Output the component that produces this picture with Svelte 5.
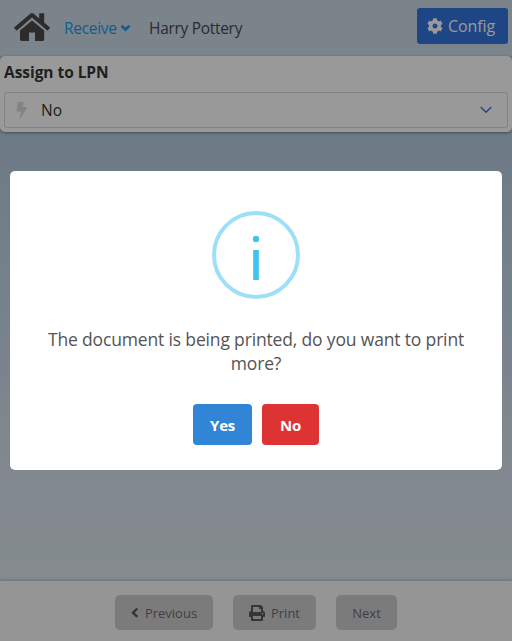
<script>
  let assign = $state('No');
  let open = $state(true);
</script>

<div class="page">
  <header>
    <svg class="home" viewBox="0 0 36 30" aria-hidden="true">
      <path d="M18 7.400 30.200 17.500V26.600q0 1.400-1.400 1.400H21V19.400H15V28H7.500Q6 28 6 26.600V17.500Z" />
      <path d="M25.200.2h5v9.300l5.500 4.800q.5.500 0 1l-1.700 1.900q-.6.500-1.100 0L18 4.600 3.200 17.200q-.6.500-1.100 0L.4 15.300q-.5-.5 0-1L16.300.7q1.700-1.200 3.400 0l5.500 4.700Z" />
    </svg>
    <span class="menu">Receive</span>
    <svg class="caret" viewBox="0 0 11 8" aria-hidden="true"><path d="M1.500 1.700 5.500 5.600 9.500 1.700" /></svg>
    <span class="user">Harry Pottery</span>
    <button class="config">
      <svg viewBox="0 0 512 512" aria-hidden="true"><path d="M487.400 315.700l-42.600-24.600c4.300-23.200 4.300-47 0-70.200l42.600-24.600c4.900-2.800 7.100-8.600 5.500-14-11.100-35.600-30-67.800-54.700-94.600-3.800-4.100-10-5.100-14.800-2.300L380.800 110c-17.900-15.400-38.500-27.300-60.800-35.100V25.800c0-5.600-3.900-10.500-9.400-11.700-36.700-8.200-74.300-7.800-109.200 0-5.500 1.200-9.400 6.100-9.400 11.700V75c-22.200 7.900-42.800 19.800-60.800 35.100L88.700 85.500c-4.900-2.800-11-1.900-14.800 2.300-24.700 26.700-43.600 58.900-54.700 94.600-1.700 5.400.6 11.200 5.500 14L67.300 221c-4.300 23.200-4.300 47 0 70.200l-42.600 24.600c-4.900 2.800-7.100 8.600-5.500 14 11.100 35.600 30 67.800 54.700 94.600 3.800 4.100 10 5.100 14.800 2.300l42.600-24.600c17.900 15.400 38.500 27.300 60.800 35.100v49.200c0 5.600 3.900 10.500 9.400 11.700 36.700 8.200 74.300 7.800 109.200 0 5.500-1.200 9.400-6.100 9.400-11.700v-49.200c22.200-7.900 42.800-19.800 60.800-35.100l42.600 24.600c4.900 2.800 11 1.900 14.800-2.300 24.700-26.700 43.600-58.900 54.700-94.600 1.500-5.500-.7-11.300-5.600-14.100zM256 336c-44.100 0-80-35.900-80-80s35.900-80 80-80 80 35.900 80 80-35.900 80-80 80z" /></svg>
      <span>Config</span>
    </button>
  </header>

  <section class="card">
    <label for="lpn">Assign to LPN</label>
    <div class="select" id="lpn">
      <svg class="bolt" viewBox="0 0 12 17" aria-hidden="true"><path d="M1.700 0H8L6.500 5H10.500Q11.300 5.100 10.800 6L4.800 16.200Q3.700 16.800 3.800 15.600L5 9.700H1.200Q.4 9.600.5 8.700Z" /></svg>
      <span>{assign}</span>
      <svg class="chev" viewBox="0 0 12 8" aria-hidden="true"><path d="M.7 1 6 6.300 11.300 1" /></svg>
    </div>
  </section>

  <div class="space"></div>

  <footer>
    <button class="prev">
      <svg viewBox="0 0 8 12" aria-hidden="true"><path d="M6.300 1.500 2 5.700 6.300 9.900" /></svg>
      <span>Previous</span>
    </button>
    <button class="print">
      <svg viewBox="0 0 512 512" aria-hidden="true"><path d="M448 192V77.250c0-8.490-3.370-16.620-9.370-22.630L393.370 9.370c-6-6-14.140-9.370-22.630-9.370H96C78.330 0 64 14.330 64 32v160c-35.350 0-64 28.650-64 64v112c0 8.840 7.160 16 16 16h48v96c0 17.670 14.330 32 32 32h320c17.670 0 32-14.330 32-32v-96h48c8.840 0 16-7.160 16-16V256c0-35.350-28.650-64-64-64zm-64 256H128v-96h256v96zm0-224H128V64h192v48c0 8.840 7.160 16 16 16h48v96zm48 72c-13.250 0-24-10.750-24-24 0-13.260 10.750-24 24-24s24 10.740 24 24c0 13.250-10.750 24-24 24z" /></svg>
      <span>Print</span>
    </button>
    <button class="next"><span>Next</span></button>
  </footer>

  {#if open}
    <div class="backdrop">
      <div class="dialog" role="dialog" aria-modal="true">
        <div class="info">
          <svg viewBox="0 0 80 80" aria-hidden="true"><circle cx="40" cy="24" r="3.200" /><rect x="37.200" y="35" width="5.600" height="30" /></svg>
        </div>
        <p>The document is being printed, do you want to print more?</p>
        <div class="actions">
          <button class="yes" onclick={() => (open = false)}>Yes</button>
          <button class="no" onclick={() => (open = false)}>No</button>
        </div>
      </div>
    </div>
  {/if}
</div>

<style>
  .page {
    position: relative;
    display: flex;
    flex-direction: column;
    width: 512px;
    height: 641px;
    overflow: hidden;
    background: linear-gradient(#a9c4de, #b4cce0 20%, #d9e4f0 76%, #dde8eb 92%);
    color: #363636;
    font-family: 'Open Sans', 'Noto Sans', sans-serif;
    font-size: 15.500px;
  }
  button {
    display: flex;
    align-items: center;
    justify-content: center;
    box-sizing: border-box;
    margin: 0;
    padding: 0;
    border: 0;
    font: inherit;
    color: inherit;
  }
  svg { display: block; flex: none; }
  span { white-space: nowrap; }
  header {
    display: flex;
    align-items: center;
    height: 56px;
    box-sizing: border-box;
    padding: 0 4px 0 14px;
    background: #cddae8;
  }
  .home { width: 36px; height: 30px; fill: #4a4a4a; }
  .menu { width: 54px; margin-left: 14px; color: #209cee; letter-spacing: -0.3px; }
  .caret { width: 11px; height: 8px; margin-left: 2px; fill: none; stroke: #209cee; stroke-width: 2.8; }
  .user { margin-left: 18px; color: #4a4a4a; letter-spacing: -0.3px; }
  .config {
    width: 91px;
    height: 36px;
    margin: -4px 0 0 auto;
    gap: 5px;
    border-radius: 3px;
    background: #3273dc;
    color: #fff;
    font-size: 16px;
    letter-spacing: -0.1px;
  }
  .config svg { width: 16px; height: 16px; margin-left: -3px; fill: #fff; }
  .card {
    height: 76px;
    box-sizing: border-box;
    padding: 5px 4px 4px;
    border-radius: 5px;
    background: #fff;
    box-shadow: 0 1px 3px rgba(0, 0, 0, 0.4);
  }
  label { display: block; height: 31px; line-height: 23px; font-weight: 700; letter-spacing: -0.05px; }
  .select {
    display: flex;
    align-items: center;
    height: 36px;
    box-sizing: border-box;
    padding: 0 15px 0 11px;
    border: 1px solid #dbdbdb;
    border-radius: 3px;
  }
  .bolt { width: 12px; height: 17px; fill: #dbdbdb; }
  .select span { margin-left: 13px; }
  .chev { width: 12px; height: 8px; margin-left: auto; fill: none; stroke: #3273dc; stroke-width: 1.3; }
  .space { flex: 1; }
  footer {
    display: flex;
    justify-content: center;
    gap: 20px;
    height: 60px;
    box-sizing: border-box;
    padding-top: 14px;
    background: #f8f8f8;
    box-shadow: 0 -1px 3px rgba(0, 0, 0, 0.2);
    font-size: 13px;
    color: #6c6c6c;
  }
  footer button { height: 35px; border-radius: 5px; background: #cdcdcd; }
  .prev { width: 98px; gap: 6px; }
  .prev svg { width: 8px; height: 12px; fill: none; stroke: #5b5b5b; stroke-width: 2.4; }
  .print { width: 83px; gap: 6px; }
  .print svg { width: 16px; height: 16px; fill: #5b5b5b; }
  .next { width: 61px; }
  .backdrop {
    position: absolute;
    inset: 0;
    display: flex;
    align-items: center;
    justify-content: center;
    background: rgba(0, 0, 0, 0.4);
  }
  .dialog {
    display: flex;
    flex-direction: column;
    align-items: center;
    width: 492px;
    height: 299px;
    box-sizing: border-box;
    padding-top: 40px;
    border-radius: 5px;
    background: #fff;
  }
  .info {
    width: 80px;
    height: 80px;
    border: 4px solid #9de0f6;
    border-radius: 50%;
  }
  .info svg { width: 80px; height: 80px; fill: #3fc3ee; }
  p {
    width: 440px;
    margin: 28px 0 29px;
    text-align: center;
    font-size: 17.500px;
    letter-spacing: -0.16px;
    line-height: 24px;
    color: #545454;
  }
  .actions { display: flex; gap: 10px; }
  .actions button {
    height: 41px;
    border-radius: 4px;
    color: #fff;
    font-size: 15px;
    font-weight: 700;
    letter-spacing: -0.3px;
  }
  .yes { width: 59px; background: #3085d6; }
  .actions .no { width: 57px; background: #dd3333; }
</style>
